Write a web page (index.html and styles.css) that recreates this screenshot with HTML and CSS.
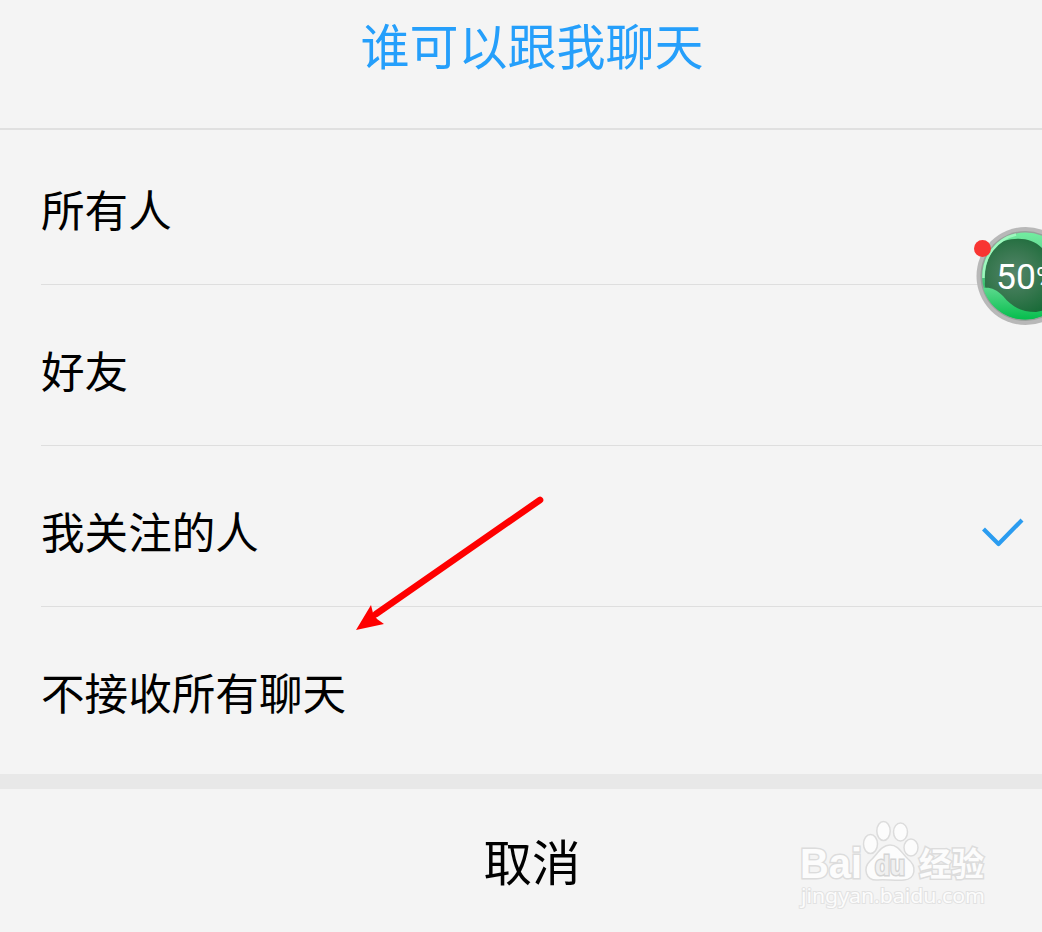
FILE: index.html
```
<!DOCTYPE html>
<html lang="zh-CN">
<head>
  <meta charset="UTF-8" />
  <meta name="viewport" content="width=device-width, initial-scale=1.0"/>
  <title>谁可以跟我聊天</title>
  <link rel="stylesheet" href="styles.css">
</head>
<body>

  <h1>谁可以跟我聊天</h1>

  <ul class="options">
    <li>所有人</li>
    <li>好友</li>
    <li class="selected">我关注的人
      <svg class="check" width="44" height="32" viewBox="0 0 44 32">
        <path d="M3.500 12 L18.500 27 L42 3" fill="none" stroke="#2b9cf0" stroke-width="4.2" stroke-linejoin="round"/>
      </svg>
    </li>
    <li>不接收所有聊天</li>
  </ul>

  <div class="cancel">取消</div>

  <!-- floating memory ball -->
  <div class="ball">
    <svg width="100" height="100" viewBox="0 0 100 100">
      <defs>
        <linearGradient id="rim" x1="0" y1="0" x2="0" y2="1">
          <stop offset="0" stop-color="#72eda0"/>
          <stop offset="0.4" stop-color="#58c887"/>
          <stop offset="1" stop-color="#06bd4d"/>
        </linearGradient>
        <radialGradient id="core" cx="0.35" cy="0.45" r="0.6">
          <stop offset="0" stop-color="#54856a"/>
          <stop offset="0.5" stop-color="#37774f"/>
          <stop offset="1" stop-color="#156935"/>
        </radialGradient>
        <linearGradient id="wave" x1="0" y1="0" x2="0" y2="1">
          <stop offset="0" stop-color="#5bd98d"/>
          <stop offset="1" stop-color="#06bd4d"/>
        </linearGradient>
      </defs>
      <circle cx="49.5" cy="50" r="49" fill="#b8b8b8"/>
      <circle cx="49.5" cy="50" r="45" fill="#98a09b"/>
      <circle cx="49.5" cy="50" r="43.5" fill="url(#rim)"/>
      <path d="M9 56 C8 36 16 20 28 15 C42 11 56 12 66 22 L93 45 V90 H50 C27 88 7 70 9 56Z" fill="url(#core)"/>
      <path d="M7 62 C14 61 20 63 27 70 C37 82 46 86 60 86 L78 82 A43.500 43.500 0 0 1 7 62Z" fill="url(#wave)"/>
      <path d="M7.500 52 C7 30 21 13 40 8.500" fill="none" stroke="#9ef8be" stroke-width="2.5"/>
    </svg>
    <span class="percent">50<small>%</small></span>
    <span class="dot"></span>
  </div>

  <!-- pointer to the last option -->
  <svg class="arrow" width="190" height="136" viewBox="0 0 190 136">
    <path d="M186 5 L22 119" stroke="#fe0000" stroke-width="6.6" stroke-linecap="round"/>
    <path d="M2 135 L17 110 L19 118 L23 124 L30 129Z" fill="#fe0000"/>
  </svg>

  <svg class="watermark" width="200" height="100" viewBox="0 0 200 100">
    <g class="mark">
      <text class="bai" x="6" y="63" textLength="62" lengthAdjust="spacingAndGlyphs">Bai</text>
      <ellipse cx="76.500" cy="29" rx="7" ry="9.500"/>
      <ellipse cx="89.500" cy="16" rx="6.700" ry="9.500"/>
      <ellipse cx="106.500" cy="17" rx="7" ry="9"/>
      <ellipse cx="117" cy="32.500" rx="7" ry="8.500"/>
      <path d="M96 30 C105 30 108 39 114 44 C123 51 122 64 110 65 C103 66 90 64 84 65 C71 66 69 53 76 46 C83 40 87 30 96 30Z"/>
      <text class="du" x="81" y="60" textLength="30" lengthAdjust="spacingAndGlyphs">du</text>
      <text class="cn" x="125" y="61">经验</text>
      <text class="url" x="7" y="88" textLength="184" lengthAdjust="spacingAndGlyphs">jingyan.baidu.com</text>
    </g>
  </svg>

</body>
</html>
```
FILE: styles.css
```
* {
  box-sizing: border-box;
}

body {
  position: relative;
  margin: 0;
  height: 932px;
  overflow: hidden;
  background-color: #f4f4f4;
  color: #000;
  font-family: "Noto Sans CJK SC", sans-serif;
}

h1 {
  margin: 0;
  height: 130px;
  padding: 9px 0 0 22px;
  border-bottom: 2px solid #e0e0e0;
  color: #259ffb;
  font-size: 49px;
  font-weight: 400;
  line-height: 70px;
  text-align: center;
}

.options {
  list-style: none;
  margin: 0;
  padding: 0 0 0 41px;
  height: 644px;
}

.options li {
  display: flex;
  justify-content: space-between;
  height: 161px;
  padding: 52px 18px 0 0;
  border-bottom: 1px solid #dedede;
  font-size: 43.6px;
  line-height: 64px;
}

.options li:first-child {
  height: 155px;
  padding-top: 46px;
}

.options li:last-child {
  border-bottom: none;
}

.check {
  margin-top: 19px;
}

.cancel {
  height: 158px;
  padding: 36px 0 0 22px;
  border-top: 15px solid #e8e8e8;
  font-size: 48.5px;
  line-height: 70px;
  text-align: center;
}

.ball {
  position: absolute;
  left: 976px;
  top: 226px;
  width: 100px;
  height: 100px;
}

.percent {
  position: absolute;
  left: 20px;
  top: 31px;
  color: #fff;
  font-family: Roboto, sans-serif;
  font-size: 35.5px;
  line-height: 40px;
}

.percent small {
  position: relative;
  top: -2px;
  font-size: 27px;
}

.dot {
  position: absolute;
  left: -2px;
  top: 14px;
  width: 17px;
  height: 17px;
  border-radius: 50%;
  background-color: #f83532;
}

.arrow {
  position: absolute;
  left: 354px;
  top: 495px;
}

.watermark {
  position: absolute;
  left: 794px;
  top: 815px;
}

.mark {
  fill: #fcfcfc;
  stroke: #dcdcdc;
  stroke-width: 1.5;
}

.mark text {
  paint-order: stroke;
  stroke-width: 3;
}

.bai {
  font: bold 42px "Liberation Sans", sans-serif;
}

.mark .du {
  font: bold 27px "Liberation Sans", sans-serif;
  fill: #f0f0f0;
  stroke: #d4d4d4;
}

.cn {
  font: bold 32.5px "Noto Sans CJK SC", sans-serif;
}

.mark .url {
  font: 20.5px "Noto Sans", sans-serif;
  stroke: #e2e2e2;
  stroke-width: 2;
}
```
